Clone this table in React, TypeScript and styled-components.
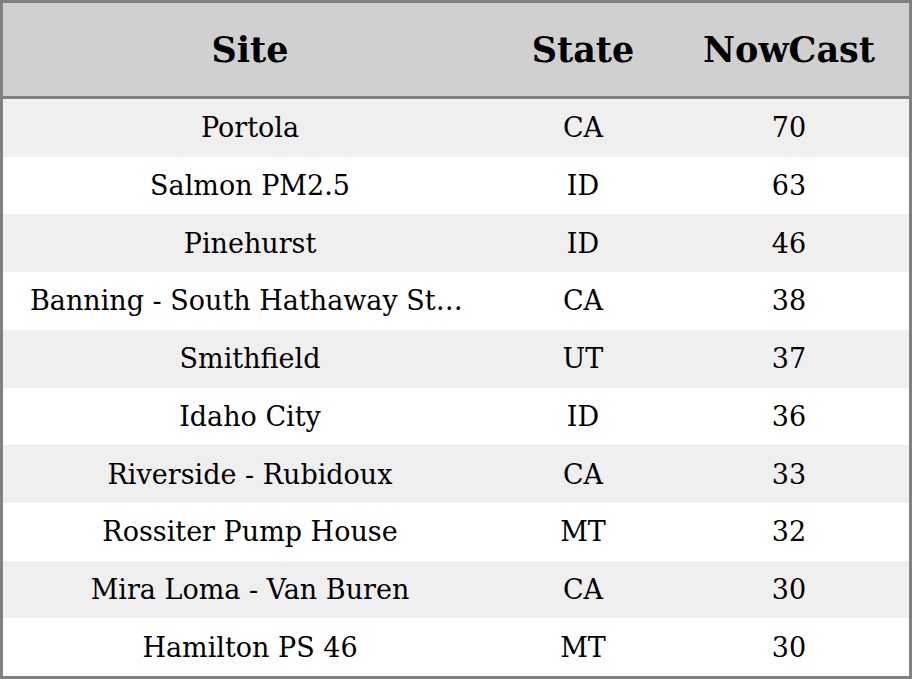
import styled, { createGlobalStyle } from "styled-components";

const GlobalStyle = createGlobalStyle`
  html, body {
    margin: 0;
    padding: 0;
    background: #fff;
  }
  body {
    font-family: "DejaVu Serif", serif;
    color: #000;
  }
`;

type Site = {
  name: string;
  state: string;
  nowcast: number;
};

const sites: Site[] = [
  { name: "Portola", state: "CA", nowcast: 70 },
  { name: "Salmon PM2.5", state: "ID", nowcast: 63 },
  { name: "Pinehurst", state: "ID", nowcast: 46 },
  { name: "Banning - South Hathaway Street", state: "CA", nowcast: 38 },
  { name: "Smithfield", state: "UT", nowcast: 37 },
  { name: "Idaho City", state: "ID", nowcast: 36 },
  { name: "Riverside - Rubidoux", state: "CA", nowcast: 33 },
  { name: "Rossiter Pump House", state: "MT", nowcast: 32 },
  { name: "Mira Loma - Van Buren", state: "CA", nowcast: 30 },
  { name: "Hamilton PS 46", state: "MT", nowcast: 30 },
];

const Table = styled.div`
  box-sizing: border-box;
  width: 912px;
  height: 679px;
  border: 3px solid #808080;
  display: flex;
  flex-direction: column;
`;

const Row = styled.div<{ striped?: boolean }>`
  display: grid;
  grid-template-columns: 494px 172px 1fr;
  align-items: center;
  flex: 1 1 0;
  min-height: 0;
  background: ${(props) => (props.striped ? "#efefef" : "#ffffff")};
`;

const HeaderRow = styled(Row)`
  flex: 0 0 93px;
  background: #d0d0d0;
  border-bottom: 3px solid #808080;
`;

const HeadCell = styled.div`
  text-align: center;
  font-weight: bold;
  font-size: 35px;
`;

const Cell = styled.div`
  text-align: center;
  font-size: 27px;
  padding: 0 27px;
  white-space: nowrap;
  overflow: hidden;
  text-overflow: ellipsis;
`;

export default function App() {
  return (
    <>
      <GlobalStyle />
      <Table>
        <HeaderRow>
          <HeadCell>Site</HeadCell>
          <HeadCell>State</HeadCell>
          <HeadCell>NowCast</HeadCell>
        </HeaderRow>
        {sites.map((s, i) => (
          <Row key={s.name} striped={i % 2 === 0}>
            <Cell>{s.name}</Cell>
            <Cell>{s.state}</Cell>
            <Cell>{s.nowcast}</Cell>
          </Row>
        ))}
      </Table>
    </>
  );
}
